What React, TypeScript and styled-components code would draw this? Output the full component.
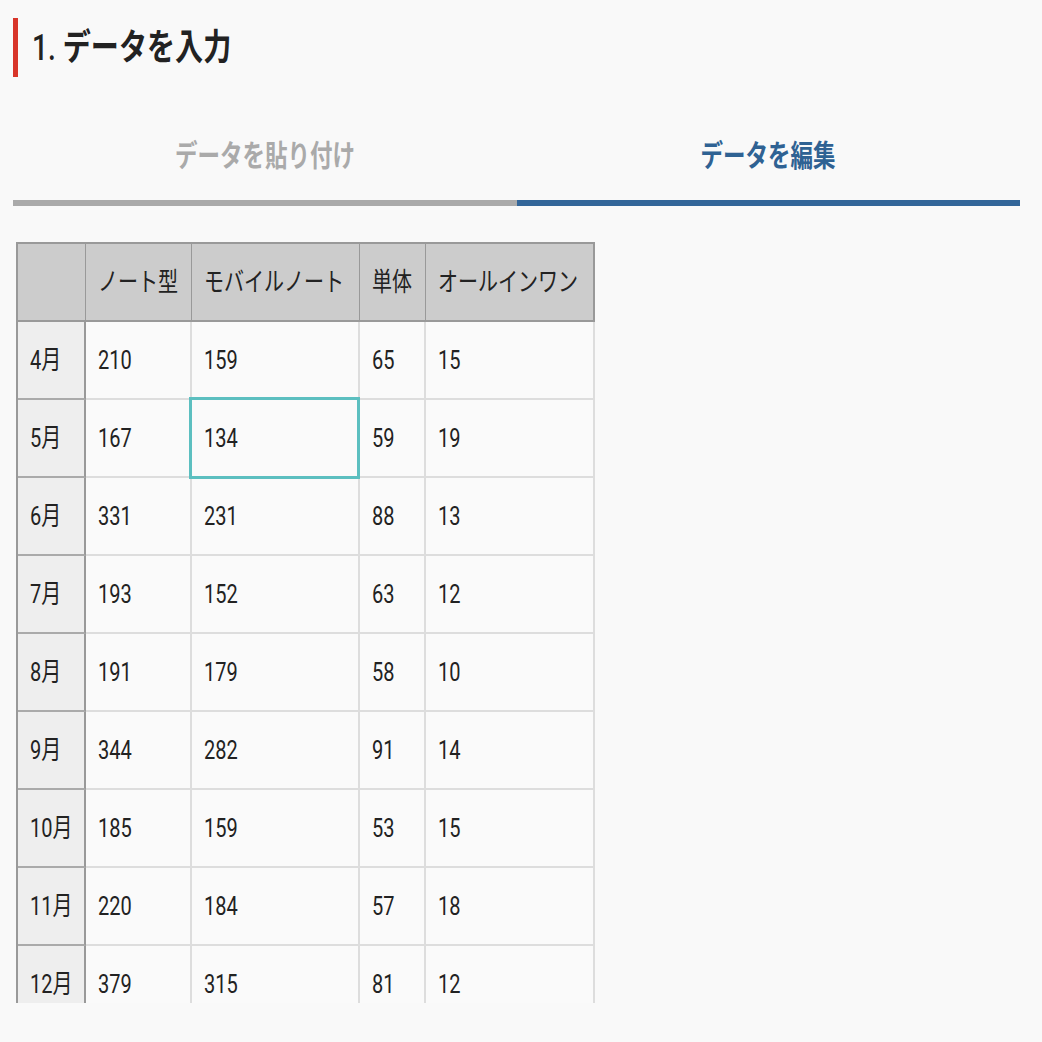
import React from "react";
import styled, { createGlobalStyle } from "styled-components";

const GlobalStyle = createGlobalStyle`
  html, body {
    margin: 0;
    padding: 0;
    background: #f9f9f9;
  }
  body {
    font-family: Roboto, "Noto Sans CJK JP", "Noto Sans", sans-serif;
    color: #222;
  }
`;

const Page = styled.div`
  padding: 18px 22px 0 13px;
  box-sizing: border-box;
  width: 1042px;
`;

const Squeeze = styled.span<{ $scale?: number; $origin?: string }>`
  display: inline-block;
  white-space: nowrap;
  transform: scaleX(${(p) => p.$scale ?? 0.77});
  transform-origin: ${(p) => p.$origin ?? "left center"};
`;

const Heading = styled.h2`
  margin: 0;
  height: 59px;
  display: flex;
  align-items: center;
  border-left: 5px solid #d8352a;
  padding-left: 14px;
  font-size: 36px;
  font-weight: 700;
  line-height: 1;
  color: #222;
`;

const HeadingNum = styled.span`
  font-weight: 500;
`;

const Tabs = styled.div`
  display: grid;
  grid-template-columns: 1fr 1fr;
  margin-top: 35px;
`;

const Tab = styled.div<{ $active?: boolean }>`
  height: 94px;
  box-sizing: border-box;
  display: flex;
  align-items: center;
  justify-content: center;
  border-bottom: 6px solid ${(p) => (p.$active ? "#336699" : "#aaaaaa")};
  color: ${(p) => (p.$active ? "#2f6293" : "#aaaaaa")};
  font-size: 30px;
  font-weight: 700;
  line-height: 1;
  cursor: pointer;
`;

const Viewport = styled.div`
  margin-top: 36px;
  margin-left: 3px;
  height: 761px;
  overflow: hidden;
`;

const Table = styled.table`
  border-collapse: separate;
  border-spacing: 0;
  table-layout: fixed;
  width: 579px;
  border-top: 2px solid #999;
  border-left: 2px solid #999;
  font-size: 26px;
  line-height: 1;
`;

const HeadCell = styled.th<{ $last?: boolean }>`
  box-sizing: border-box;
  height: 78px;
  padding: 0 12px;
  background: #cccccc;
  border-right: ${(p) => (p.$last ? "2px solid #999" : "1px solid #999")};
  border-bottom: 2px solid #999;
  text-align: left;
  font-weight: 400;
  color: #222;
  overflow: hidden;
`;

const RowHead = styled.th`
  box-sizing: border-box;
  height: 78px;
  padding: 0 12px;
  background: #eeeeee;
  border-right: 2px solid #999;
  border-bottom: 2px solid #aaa;
  text-align: left;
  font-weight: 400;
  color: #222;
`;

const Cell = styled.td<{ $selected?: boolean }>`
  position: relative;
  box-sizing: border-box;
  height: 78px;
  padding: 0 12px;
  background: #fafafa;
  border-right: 2px solid #dddddd;
  border-bottom: 2px solid #dddddd;
  color: #222;

  &::after {
    content: "";
    display: ${(p) => (p.$selected ? "block" : "none")};
    position: absolute;
    top: -3px;
    left: -3px;
    right: -2px;
    bottom: -3px;
    border: 3px solid #5cbfc0;
    pointer-events: none;
    z-index: 1;
  }
`;

const headers = ["ノート型", "モバイルノート", "単体", "オールインワン"];
const colWidths = [68, 106, 168, 66, 169];

const rows: [string, number[]][] = [
  ["4月", [210, 159, 65, 15]],
  ["5月", [167, 134, 59, 19]],
  ["6月", [331, 231, 88, 13]],
  ["7月", [193, 152, 63, 12]],
  ["8月", [191, 179, 58, 10]],
  ["9月", [344, 282, 91, 14]],
  ["10月", [185, 159, 53, 15]],
  ["11月", [220, 184, 57, 18]],
  ["12月", [379, 315, 81, 12]],
];

export default function App() {
  return (
    <>
      <GlobalStyle />
      <Page>
        <Heading>
          <Squeeze $scale={0.78}>
            <HeadingNum>1.</HeadingNum> データを入力
          </Squeeze>
        </Heading>
        <Tabs>
          <Tab>
            <Squeeze $scale={0.75} $origin="center center">
              データを貼り付け
            </Squeeze>
          </Tab>
          <Tab $active>
            <Squeeze $scale={0.75} $origin="center center">
              データを編集
            </Squeeze>
          </Tab>
        </Tabs>
        <Viewport>
          <Table>
            <colgroup>
              {colWidths.map((w, i) => (
                <col key={i} style={{ width: w }} />
              ))}
            </colgroup>
            <thead>
              <tr>
                <HeadCell />
                {headers.map((h, i) => (
                  <HeadCell key={h} $last={i === headers.length - 1}>
                    <Squeeze>{h}</Squeeze>
                  </HeadCell>
                ))}
              </tr>
            </thead>
            <tbody>
              {rows.map(([label, values], r) => (
                <tr key={label}>
                  <RowHead>
                    <Squeeze>{label}</Squeeze>
                  </RowHead>
                  {values.map((v, c) => (
                    <Cell key={c} $selected={r === 1 && c === 1}>
                      <Squeeze>{v}</Squeeze>
                    </Cell>
                  ))}
                </tr>
              ))}
            </tbody>
          </Table>
        </Viewport>
      </Page>
    </>
  );
}
